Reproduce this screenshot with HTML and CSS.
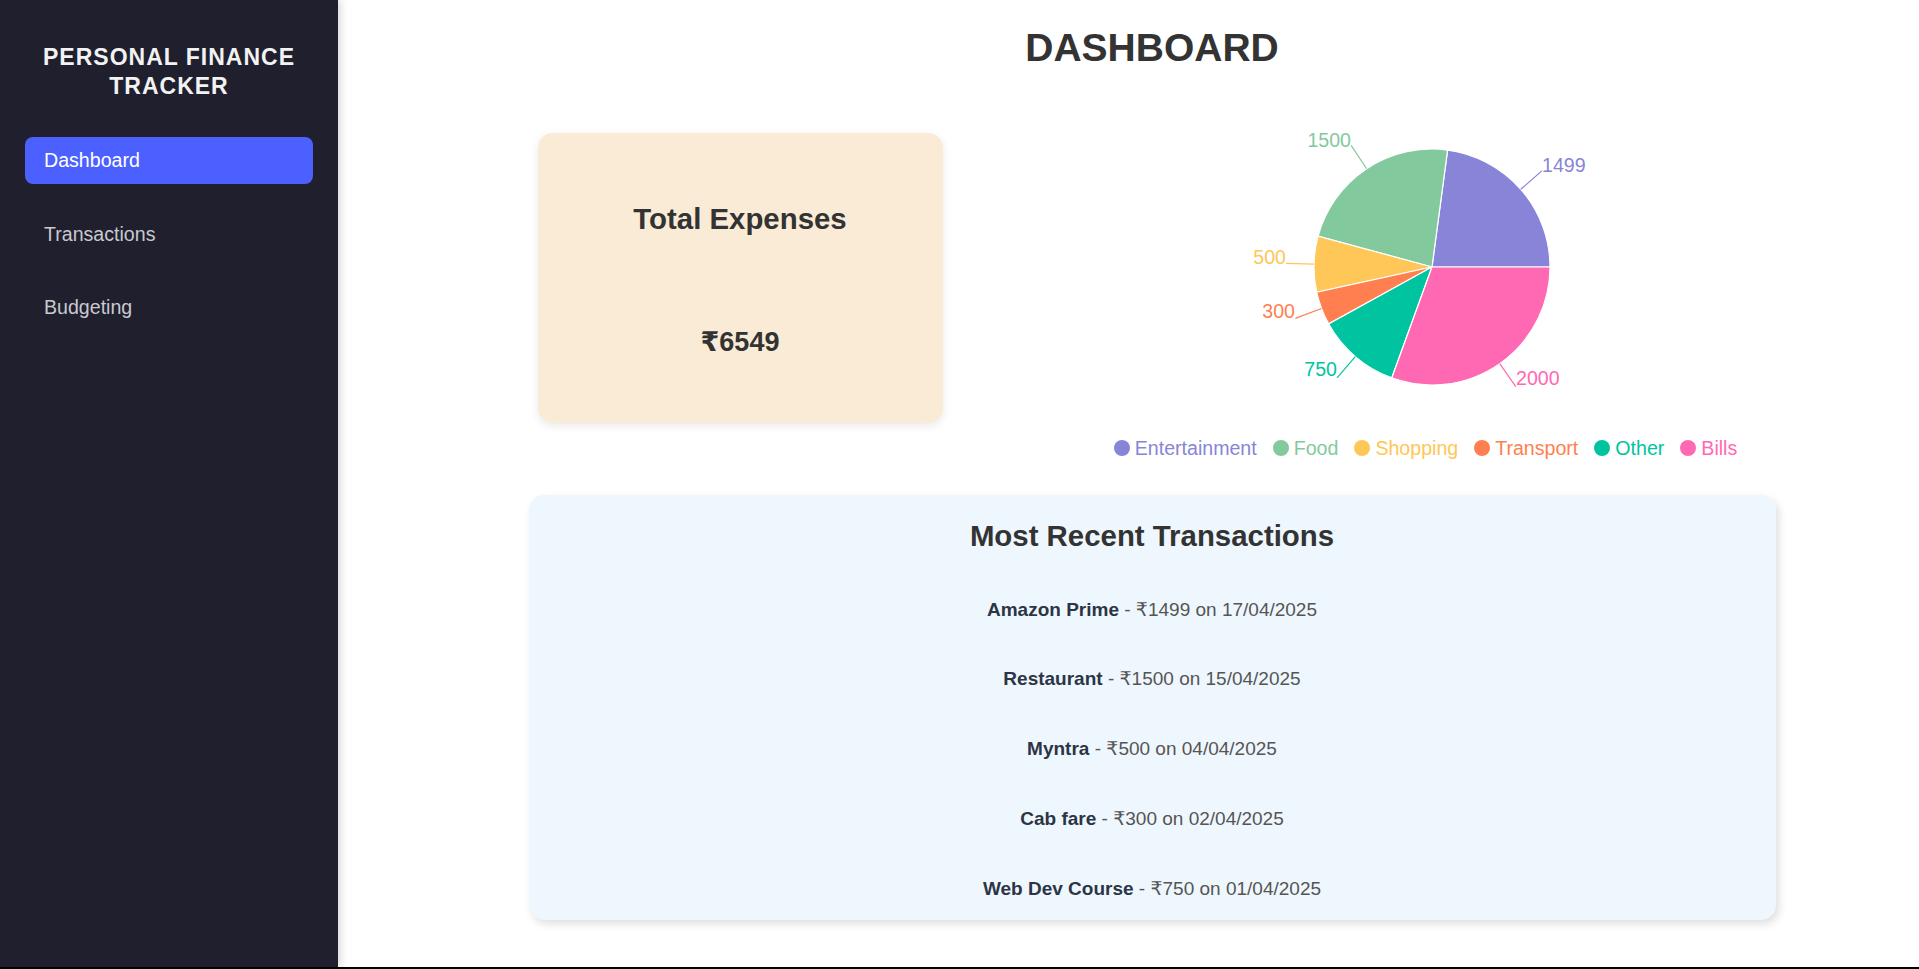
FILE: index.html
```html
<!DOCTYPE html>
<html lang="en">
<head>
<meta charset="utf-8">
<title>Personal Finance Tracker</title>
<link rel="stylesheet" href="styles.css">
</head>
<body>
<div class="app">
  <aside class="sidebar">
    <h2 class="brand">PERSONAL FINANCE TRACKER</h2>
    <nav class="nav">
      <a class="nav-item active" href="#">Dashboard</a>
      <a class="nav-item" href="#">Transactions</a>
      <a class="nav-item" href="#">Budgeting</a>
    </nav>
  </aside>
  <main class="main">
    <h1 class="page-title">DASHBOARD</h1>
    <section class="top-row">
      <div class="total-card">
        <h2 class="card-title">Total Expenses</h2>
        <p class="total-amount">₹6549</p>
      </div>
      <div class="chart-box">
        <svg class="pie" width="624" height="300" viewBox="0 0 624 300">
          <g stroke="#fff" stroke-width="1.2">
            <path fill="#8884d8" d="M318,147 L436,147 A118,118 0 0 0 333.61,30.04 Z"/>
            <path fill="#82ca9d" d="M318,147 L333.61,30.04 A118,118 0 0 0 204.11,116.16 Z"/>
            <path fill="#ffc658" d="M318,147 L204.11,116.16 A118,118 0 0 0 202.72,172.22 Z"/>
            <path fill="#ff7f50" d="M318,147 L202.72,172.22 A118,118 0 0 0 214.63,203.90 Z"/>
            <path fill="#00c49f" d="M318,147 L214.63,203.90 A118,118 0 0 0 277.76,257.93 Z"/>
            <path fill="#ff69b4" d="M318,147 L277.76,257.93 A118,118 0 0 0 436,147 Z"/>
          </g>
          <g fill="none" stroke-width="1.2">
            <path stroke="#8884d8" d="M406.78,69.27 L427.85,50.83"/>
            <path stroke="#82ca9d" d="M252.65,48.74 L237.15,25.43"/>
            <path stroke="#ffc658" d="M200.04,144.12 L172.04,143.43"/>
            <path stroke="#ff7f50" d="M207.54,188.50 L181.33,198.34"/>
            <path stroke="#00c49f" d="M241.29,236.67 L223.09,257.94"/>
            <path stroke="#ff69b4" d="M385.73,243.62 L401.80,266.55"/>
          </g>
          <g class="pie-labels">
            <text x="428" y="52" fill="#8884d8" text-anchor="start">1499</text>
            <text x="237" y="27" fill="#82ca9d" text-anchor="end">1500</text>
            <text x="172" y="143.5" fill="#ffc658" text-anchor="end">500</text>
            <text x="181" y="197.5" fill="#ff7f50" text-anchor="end">300</text>
            <text x="223" y="256" fill="#00c49f" text-anchor="end">750</text>
            <text x="402" y="265" fill="#ff69b4" text-anchor="start">2000</text>
          </g>
        </svg>
        <ul class="legend">
          <li class="legend-item ent"><span class="dot"></span>Entertainment</li>
          <li class="legend-item food"><span class="dot"></span>Food</li>
          <li class="legend-item shop"><span class="dot"></span>Shopping</li>
          <li class="legend-item trans"><span class="dot"></span>Transport</li>
          <li class="legend-item other"><span class="dot"></span>Other</li>
          <li class="legend-item bills"><span class="dot"></span>Bills</li>
        </ul>
      </div>
    </section>
    <section class="recent-card">
      <h2 class="card-title recent-title">Most Recent Transactions</h2>
      <ul class="tx-list">
        <li class="tx"><strong>Amazon Prime</strong> - ₹1499 on 17/04/2025</li>
        <li class="tx"><strong>Restaurant</strong> - ₹1500 on 15/04/2025</li>
        <li class="tx"><strong>Myntra</strong> - ₹500 on 04/04/2025</li>
        <li class="tx"><strong>Cab fare</strong> - ₹300 on 02/04/2025</li>
        <li class="tx"><strong>Web Dev Course</strong> - ₹750 on 01/04/2025</li>
      </ul>
    </section>
  </main>
</div>
</body>
</html>
```

FILE: styles.css
```css
* {
  box-sizing: border-box;
}

html {
  background: #000;
}

body {
  margin: 0;
  font-family: "Liberation Sans", Arial, "DejaVu Sans", sans-serif;
  color: #333;
}

.app {
  display: flex;
  height: 967px;
  background: #fff;
  overflow: hidden;
}

/* Sidebar */
.sidebar {
  width: 338px;
  flex: 0 0 338px;
  background: #1f1f2e;
  padding: 43px 25px 0;
  position: relative;
  z-index: 1;
  box-shadow: 2px 0 8px rgba(0, 0, 0, 0.18);
}

.brand {
  margin: 0;
  font-size: 23px;
  line-height: 29px;
  font-weight: 700;
  letter-spacing: 1px;
  text-align: center;
  color: #f2f2f2;
}

.nav {
  display: flex;
  flex-direction: column;
  gap: 26.5px;
  margin-top: 36px;
}

.nav-item {
  display: block;
  padding: 12px 19px;
  font-size: 19.6px;
  line-height: 23px;
  color: #c9c9cf;
  text-decoration: none;
  border-radius: 8px;
}

.nav-item.active {
  background: #4c5fff;
  color: #fff;
}

/* Main */
.main {
  flex: 1;
  padding: 25px 20px 0 67px;
}

.page-title {
  margin: 0;
  font-size: 39px;
  line-height: 45px;
  font-weight: 700;
  text-align: center;
  color: #333;
}

.top-row {
  width: 1247px;
  margin: 50px auto 0;
  display: flex;
  align-items: flex-start;
}

.total-card {
  width: 405px;
  height: 290px;
  margin: 13px 0 0 9px;
  padding-top: 69px;
  background: #faebd7;
  border-radius: 15px;
  box-shadow: 0 3px 10px rgba(0, 0, 0, 0.09);
  text-align: center;
}

.card-title {
  margin: 0;
  font-size: 29.4px;
  line-height: 34px;
  font-weight: 700;
  color: #333;
}

.total-amount {
  margin: 91px 0 0;
  font-size: 27px;
  line-height: 31px;
  font-weight: 700;
  color: #333;
}

.chart-box {
  width: 624px;
  margin-left: 171px;
  display: flex;
  flex-direction: column;
  align-items: center;
}

.pie {
  display: block;
}

.pie-labels text {
  font-family: "Liberation Sans", Arial, sans-serif;
  font-size: 19.6px;
}

.legend {
  list-style: none;
  margin: 16px 0 0;
  padding: 0;
  display: flex;
  justify-content: center;
  gap: 16px;
  font-size: 19.6px;
  line-height: 24px;
}

.legend-item {
  display: flex;
  align-items: center;
}

.dot {
  width: 16px;
  height: 16px;
  border-radius: 50%;
  margin-right: 5px;
  background: currentColor;
}

.ent { color: #8884d8; }
.food { color: #82ca9d; }
.shop { color: #ffc658; }
.trans { color: #ff7f50; }
.other { color: #00c49f; }
.bills { color: #ff69b4; }

/* Recent transactions */
.recent-card {
  width: 1247px;
  margin: 35px auto 0;
  padding: 24px 30px 20px;
  background: #eff7fe;
  border-radius: 15px;
  box-shadow: 3px 4px 9px rgba(0, 0, 0, 0.13);
  text-align: center;
}

.recent-title {
  margin-bottom: 45.5px;
}

.tx-list {
  list-style: none;
  margin: 0;
  padding: 0;
  display: flex;
  flex-direction: column;
  gap: 47.8px;
}

.tx {
  font-size: 19px;
  line-height: 22px;
  color: #555;
}

.tx strong {
  color: #2c3545;
}
```
